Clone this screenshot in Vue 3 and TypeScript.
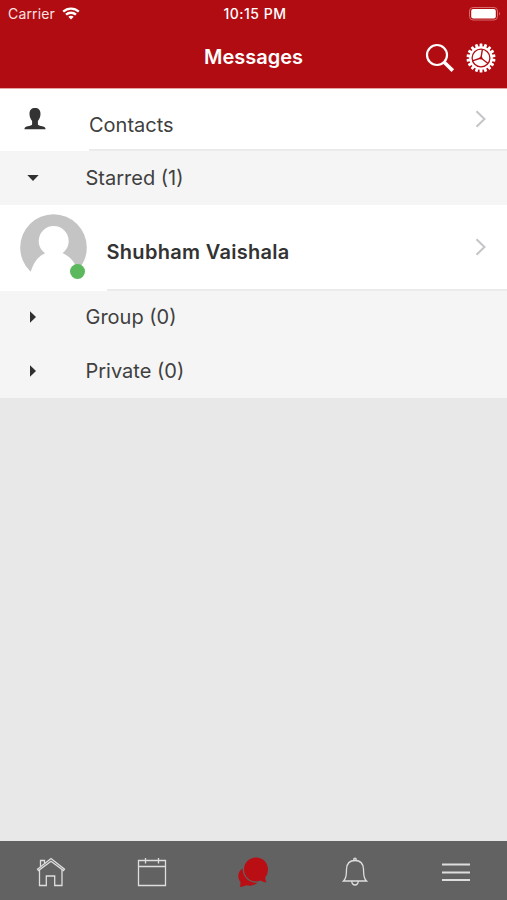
<script setup lang="ts">
interface Section {
  id: string
  label: string
  count: number
  open: boolean
  people: string[]
}

const sections: Section[] = [
  { id: 'starred', label: 'Starred', count: 1, open: true, people: ['Shubham Vaishala'] },
  { id: 'group', label: 'Group', count: 0, open: false, people: [] },
  { id: 'private', label: 'Private', count: 0, open: false, people: [] },
]

const teeth: number[] = Array.from({ length: 18 }, (_, i) => i * 20)
</script>

<template>
  <div class="screen">
    <header class="header">
      <div class="status">
        <div class="carrier">
          <span>Carrier</span>
          <svg class="wifi" width="18" height="13" viewBox="0 0 18 13" fill="none" stroke="#fff" stroke-width="2.3">
            <path d="M1.2 4.7C5.6.6 12.4.6 16.8 4.7" />
            <path d="M4 7.7C6.8 5.1 11.2 5.1 14 7.7" />
            <path d="M9 12.4 6.3 9.7Q9 7.6 11.7 9.7Z" fill="#fff" stroke="none" />
          </svg>
        </div>
        <span class="time">10:15 PM</span>
        <svg class="battery" width="33" height="14" viewBox="0 0 33 14">
          <rect x="0.5" y="0.5" width="28" height="12.5" rx="3.5" fill="none" stroke="#d9696b" />
          <rect x="2.2" y="2" width="24.6" height="9.5" rx="2" fill="#fff" />
          <path d="M30.2 4.8Q32 6.7 30.2 8.6Z" fill="#e58a8c" />
        </svg>
      </div>
      <div class="nav">
        <h1 class="title">Messages</h1>
        <div class="actions">
          <svg width="30" height="30" viewBox="0 0 30 30" fill="none" stroke="#fff">
            <circle cx="12" cy="12" r="10" stroke-width="2.2" />
            <path d="M19.2 19.2 27.8 27.6" stroke-width="3.6" />
          </svg>
          <svg width="30" height="30" viewBox="-15 -15 30 30">
            <rect v-for="angle in teeth" :key="angle" x="-1.4" y="-14.5" width="2.8" height="5" rx="0.5" fill="#fff" :transform="`rotate(${angle})`" />
            <circle r="11.8" fill="#fff" />
            <circle r="8.9" fill="none" stroke="#b40d12" stroke-width="1.3" />
            <path d="M0 0 1.4-8.8M0 0 7 5.5M0 0-8.5 2.8" stroke="#b40d12" stroke-width="1.4" />
            <circle r="1.5" fill="#b40d12" />
          </svg>
        </div>
      </div>
    </header>

    <main class="list">
      <div class="row contacts">
        <svg class="user" width="22" height="24" viewBox="0 0 22 24" fill="#333">
          <path d="M11 1C7.600 1 5.500 3 5.500 6.700C5.500 9.700 6.600 12.200 8.100 13.900V17.400C7.800 18.900 2.500 18.700 1 20.400Q.5 21 .4 22.300H21.600Q21.500 21 21 20.400C19.500 18.700 14.200 18.900 13.900 17.400V13.900C15.400 12.200 16.500 9.700 16.500 6.700C16.500 3 14.400 1 11 1Z" />
        </svg>
        <span class="label">Contacts</span>
        <svg class="chevron" width="12" height="18" viewBox="0 0 12 18"><path d="M1.500 1.300 9.500 9 1.500 16.700" /></svg>
      </div>

      <template v-for="section in sections" :key="section.id">
        <div class="section">
          <svg class="caret" :class="{ open: section.open }" width="8" height="12" viewBox="0 0 8 12"><path d="M1 0.300V11.700L7 6Z" /></svg>
          <span>{{ section.label }} ({{ section.count }})</span>
        </div>
        <div v-for="person in section.people" :key="person" class="row person">
          <div class="avatar">
            <svg width="67" height="67" viewBox="0 0 67 67">
              <circle cx="33.500" cy="33.500" r="33.300" fill="#c4c4c4" />
              <circle cx="33.700" cy="27" r="15" fill="#fff" />
              <path d="M10.800 57.500C13.500 49 17.500 42.500 25.500 39H42.500C50 42.500 55 48 58 57.500V67H10.800Z" fill="#fff" />
            </svg>
            <span class="presence"></span>
          </div>
          <span class="name">{{ person }}</span>
          <svg class="chevron" width="12" height="18" viewBox="0 0 12 18"><path d="M1.500 1.300 9.500 9 1.500 16.700" /></svg>
        </div>
      </template>
    </main>

    <nav class="tabs">
      <div class="tab">
        <svg width="30" height="32" viewBox="0 0 30 32">
          <path d="M3.500 13V28.500H10.300V19H18.700V28.500H26V13" />
          <path d="M1.500 12.200 15 1.600 28.500 12.200 27.500 13.600 15 4.200 2.500 13.600Z" />
          <path d="M4.500 9.500V3.500H8.500V6.500" />
        </svg>
      </div>
      <div class="tab">
        <svg width="30" height="32" viewBox="0 0 30 32">
          <path d="M1.500 3.500H28.500V28.500H1.500ZM1.500 9.500H28.500M8.500 1V6.500M21.500 1V6.500" />
        </svg>
      </div>
      <div class="tab">
        <svg class="chat" width="32" height="32" viewBox="0 0 32 32">
          <path d="M5.700 11.500C.3 14.500.3 21 3.300 24.500Q3.800 27.500 2.800 30Q7 29.600 9.500 28.300C14 29.500 18 28 20.500 25.700C12.500 26.500 5.200 20 5.700 11.500Z" />
          <path d="M18.900.500C26.200.500 31 6 31 12.500Q31 17 28.200 20.500Q28.200 23.500 29.500 25.500Q25.800 25 23.500 23.600C14.500 27 7 20 7 12.500C7 5.500 12.300 .500 18.900.500Z" />
        </svg>
      </div>
      <div class="tab">
        <svg width="26" height="32" viewBox="0 0 26 32">
          <path d="M1.500 24H24.500C21 20.500 21.800 16.500 21.500 12C21.200 6.500 17.800 3.500 13 3.500S4.800 6.500 4.500 12C4.200 16.500 5 20.500 1.500 24Z" />
          <circle cx="13" cy="2.300" r="1.200" />
          <path d="M9.800 24C9.500 29.300 16.500 29.300 16.200 24" />
        </svg>
      </div>
      <div class="tab">
        <svg width="30" height="32" viewBox="0 0 30 32">
          <path d="M1 7.500H29M1 15.500H29M1 23H29" stroke-width="1.800" />
        </svg>
      </div>
    </nav>
  </div>
</template>

<style>
body { margin: 0; }
</style>

<style scoped>
.screen {
  display: flex;
  flex-direction: column;
  width: 507px;
  height: 900px;
  overflow: hidden;
  background: #e8e8e8;
  color: #404040;
  font-family: Inter, Roboto, sans-serif;
}
svg { display: block; flex: none; }
.header {
  height: 88px;
  background: #b10c12;
  border-bottom: 1px solid #e8a5a3;
  color: #fff;
}
.status {
  display: grid;
  grid-template-columns: 1fr auto 1fr;
  align-items: center;
  height: 27px;
  padding: 0 5px 0 8px;
  font-size: 14px;
}
.carrier { display: flex; align-items: center; gap: 7px; color: #fbe3e1; letter-spacing: 0.150px; }
.time { font-weight: 500; font-size: 14px; letter-spacing: 0.500px; }
.battery { justify-self: end; }
.nav {
  display: grid;
  grid-template-columns: 1fr auto 1fr;
  align-items: center;
  height: 61px;
  padding: 0 11px 0 11px;
}
.title {
  grid-column: 2;
  margin: 0;
  font-size: 20px;
  font-weight: 600;
  line-height: 61px;
}
.actions { display: flex; justify-content: flex-end; gap: 11px; }
.list { flex: 1; }
.row { display: flex; align-items: center; background: #fff; position: relative; }
.contacts {
  height: 62px;
  padding: 0 20px 0 24px;
  background: linear-gradient(#ebebeb, #ebebeb) 89px 100% / 100% 2px no-repeat #fff;
}
.user { margin-bottom: 2px; }
.label { margin: 9px 0 0 43px; font-size: 20px; }
.chevron { margin: 0 0 2px auto; fill: none; stroke: #c5c5c9; stroke-width: 2; }
.section {
  display: flex;
  align-items: center;
  height: 53.500px;
  padding-left: 29px;
  background: #f5f5f5;
  font-size: 20px;
}
.section span { margin-left: 48.500px; }
.caret { fill: #303030; }
.caret.open { transform: rotate(90deg); }
.person {
  height: 86px;
  padding: 0 20px 0 20px;
  background: linear-gradient(#ebebeb, #ebebeb) 107px 100% / 100% 2px no-repeat #fff;
}
.avatar { position: relative; width: 67px; height: 67px; }
.presence {
  position: absolute;
  left: 50px;
  top: 50px;
  width: 15px;
  height: 15px;
  border-radius: 50%;
  background: #5cb85c;
}
.name { margin: 9px 0 0 19.500px; color: #333; font-size: 20px; font-weight: 600; letter-spacing: 0.300px; }
.tabs {
  display: grid;
  grid-template-columns: repeat(5, 1fr);
  height: 59px;
  background: #626262;
}
.tab { display: flex; align-items: center; justify-content: center; padding-top: 5px; }
.tab svg { fill: none; stroke: #dedede; stroke-width: 1.300; }
.tab .chat { fill: #b90e14; stroke: none; }
</style>
